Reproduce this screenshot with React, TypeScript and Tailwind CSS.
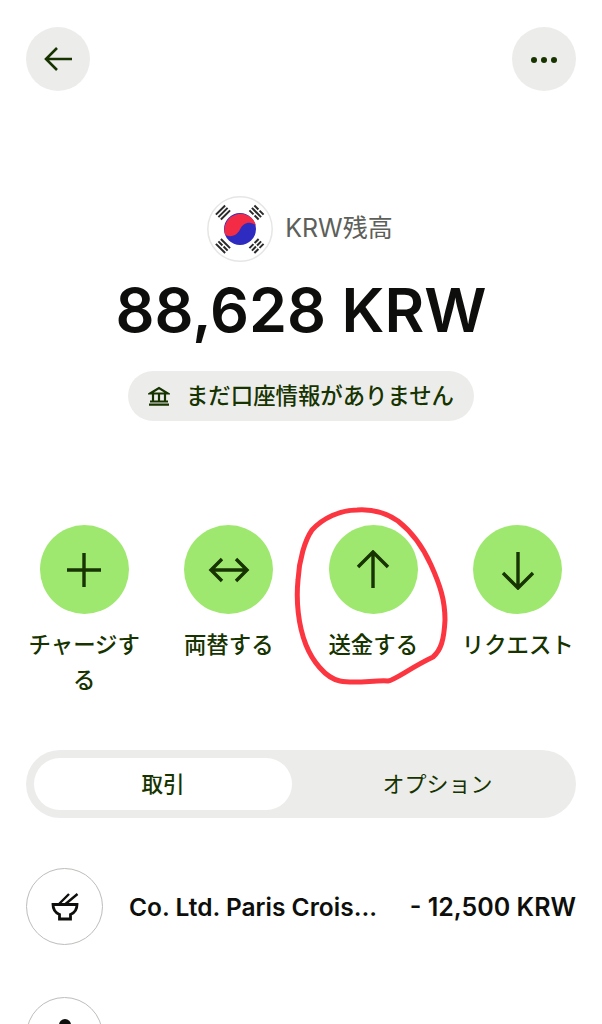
import React from "react";

const sans = "font-['Inter','Noto_Sans_CJK_JP',sans-serif]";

const actions = [
  { label: "チャージする", icon: "M24 3V37M7 20H41" },
  { label: "両替する", icon: "M8 20H40M17 9L6 20L17 31M31 9L42 20L31 31" },
  { label: "送金する", icon: "M24 38V2M9 17L24 2L39 17" },
  { label: "リクエスト", icon: "M24 2V38M9 23L24 38L39 23" },
];

const Trigram = ({ x, y, angle, bars }: { x: number; y: number; angle: number; bars: boolean[] }) => (
  <g transform={`translate(${x} ${y}) rotate(${angle})`}>
    {bars.map((broken, i) => (
      <path
        key={i}
        d={`M-6.5 ${(i - 1) * 3.5}H6.5`}
        strokeDasharray={broken ? "5.7 1.6" : undefined}
      />
    ))}
  </g>
);

const KoreaFlag = () => (
  <svg viewBox="0 0 66 66" className="h-[66px] w-[66px]">
    <circle cx="33" cy="33" r="32.2" fill="#fff" stroke="#e6e6e4" strokeWidth="1.5" />
    <circle cx="33" cy="33" r="16" fill="#2e2bc0" />
    <path d="M18 38.5C22 41.5 29 41 33 33.5C36 27 43 24.5 49 29.5A16 16 0 1 0 18 38.5Z" fill="#f32b44" />
    <g stroke="#2a2a2a" strokeWidth="2">
      <Trigram x={16} y={16.5} angle={-45} bars={[false, false, false]} />
      <Trigram x={49.5} y={16.5} angle={45} bars={[true, false, true]} />
      <Trigram x={16} y={50} angle={45} bars={[false, true, false]} />
      <Trigram x={49.5} y={50} angle={-45} bars={[true, true, true]} />
    </g>
  </svg>
);

export default function App() {
  return (
    <div className={`relative h-[1024px] w-[602px] overflow-hidden bg-white ${sans}`}>
      <header className="flex justify-between px-[26px] pt-[27px]">
        <button className="flex h-[64px] w-[64px] items-center justify-center rounded-full bg-[#ecedeb]">
          <svg viewBox="0 0 28 26" className="h-[26px] w-[28px]" fill="none" stroke="#163300" strokeWidth="2.6">
            <path d="M28 13H3M13 2L2 13L13 24" />
          </svg>
        </button>
        <button className="flex h-[64px] w-[64px] items-center justify-center rounded-full bg-[#ecedeb]">
          <svg viewBox="0 0 26 6" className="mt-[2px] h-[6px] w-[26px]" fill="#163300">
            <circle cx="3" cy="3" r="3" />
            <circle cx="13" cy="3" r="3" />
            <circle cx="23" cy="3" r="3" />
          </svg>
        </button>
      </header>

      <section className="mt-[105px] flex flex-col items-center">
        <div className="flex items-center gap-3 pr-[2px]">
          <KoreaFlag />
          <span className="text-[25px] text-[#5d5f5a]">KRW残高</span>
        </div>
        <h1 className="mt-[8px] text-[61px] leading-[80px] font-semibold text-[#0e0f0c]">88,628 KRW</h1>
        <div className="mt-[21px] flex h-[50px] items-center gap-4 rounded-full bg-[#ecedeb] px-[20px]">
          <svg viewBox="0 0 22 20" className="h-[20px] w-[22px]" fill="none" stroke="#163300" strokeWidth="2.2">
            <path d="M2 7.5L11 2L20 7.5ZM5 8V15M11 8V15M17 8V15M2 15.5H20M1 18.7H21" />
          </svg>
          <span className="text-[22.4px] font-medium text-[#163300]">まだ口座情報がありません</span>
        </div>
      </section>

      <section className="mt-[104px] grid grid-cols-4 gap-x-[20px] px-[22px]">
        {actions.map((a) => (
          <div key={a.label} className="flex flex-col items-center">
            <div className="flex h-[89px] w-[89px] items-center justify-center rounded-full bg-[#9fe870]">
              <svg viewBox="0 0 48 40" className="h-[40px] w-[48px]" fill="none" stroke="#163300" strokeWidth="3.4">
                <path d={a.icon} />
              </svg>
            </div>
            <span className="mt-[13px] w-[118px] text-center text-[22.4px] leading-[35px] font-medium break-all text-[#163300]">
              {a.label}
            </span>
          </div>
        ))}
      </section>

      <nav className="mx-[26px] mt-[53px] flex h-[68px] items-center rounded-full bg-[#ecedeb] p-[8px]">
        <div className="flex h-[52px] w-[258px] items-center justify-center rounded-full bg-white text-[21.5px] font-medium text-[#163300]">
          取引
        </div>
        <div className="ml-[15px] flex-1 text-center text-[22px] text-[#163300]">オプション</div>
      </nav>

      <ul className="mt-[50px] flex flex-col gap-[52px] px-[26px]">
        <li className="flex items-center">
          <div className="flex h-[77px] w-[77px] items-center justify-center rounded-full border border-[#bdbdbb]">
            <svg viewBox="0 0 28 28" className="h-[28px] w-[28px]" fill="none" stroke="#0e0f0c" strokeWidth="2.8">
              <path d="M2 11.5H26C26 17 23 20 19.5 21.5V26H8.5V21.5C5 20 2 17 2 11.5Z" />
              <path d="M8 11L18 1M14.5 11L26.5 1" strokeWidth="2.4" />
            </svg>
          </div>
          <span className="ml-[26px] flex-1 pt-[2px] text-[24.5px] font-semibold text-[#0e0f0c]">Co. Ltd. Paris Crois...</span>
          <span className="pt-[2px] text-[25px] font-semibold text-[#0e0f0c]">- 12,500 KRW</span>
        </li>
        <li className="flex items-start">
          <div className="flex h-[77px] w-[77px] items-center justify-center rounded-full border border-[#bdbdbb]">
            <svg viewBox="0 0 28 28" className="-mt-[6px] h-[28px] w-[28px]" fill="#0e0f0c">
              <circle cx="14" cy="6" r="6" />
              <path d="M3 27C3 20 8 17 14 17C20 17 25 20 25 27Z" />
            </svg>
          </div>
        </li>
      </ul>

      {/* hand drawn annotation on top of the screenshot */}
      <svg viewBox="0 0 602 1024" className="pointer-events-none absolute inset-0 h-[1024px] w-[602px]" fill="none">
        <path
          d="M357 510C340 510 323 518 312 530C305 540 299 560 298 580C296 600 298 625 306 645C312 660 325 678 340 681C355 684 375 680 388 681C395 680 410 668 433 657C441 650 444 640 445 620C445 600 440 585 431 565C422 545 412 532 398 521C385 512 372 509 357 510Z"
          stroke="#fb3640"
          strokeWidth="5"
          strokeLinecap="round"
        />
      </svg>
    </div>
  );
}
